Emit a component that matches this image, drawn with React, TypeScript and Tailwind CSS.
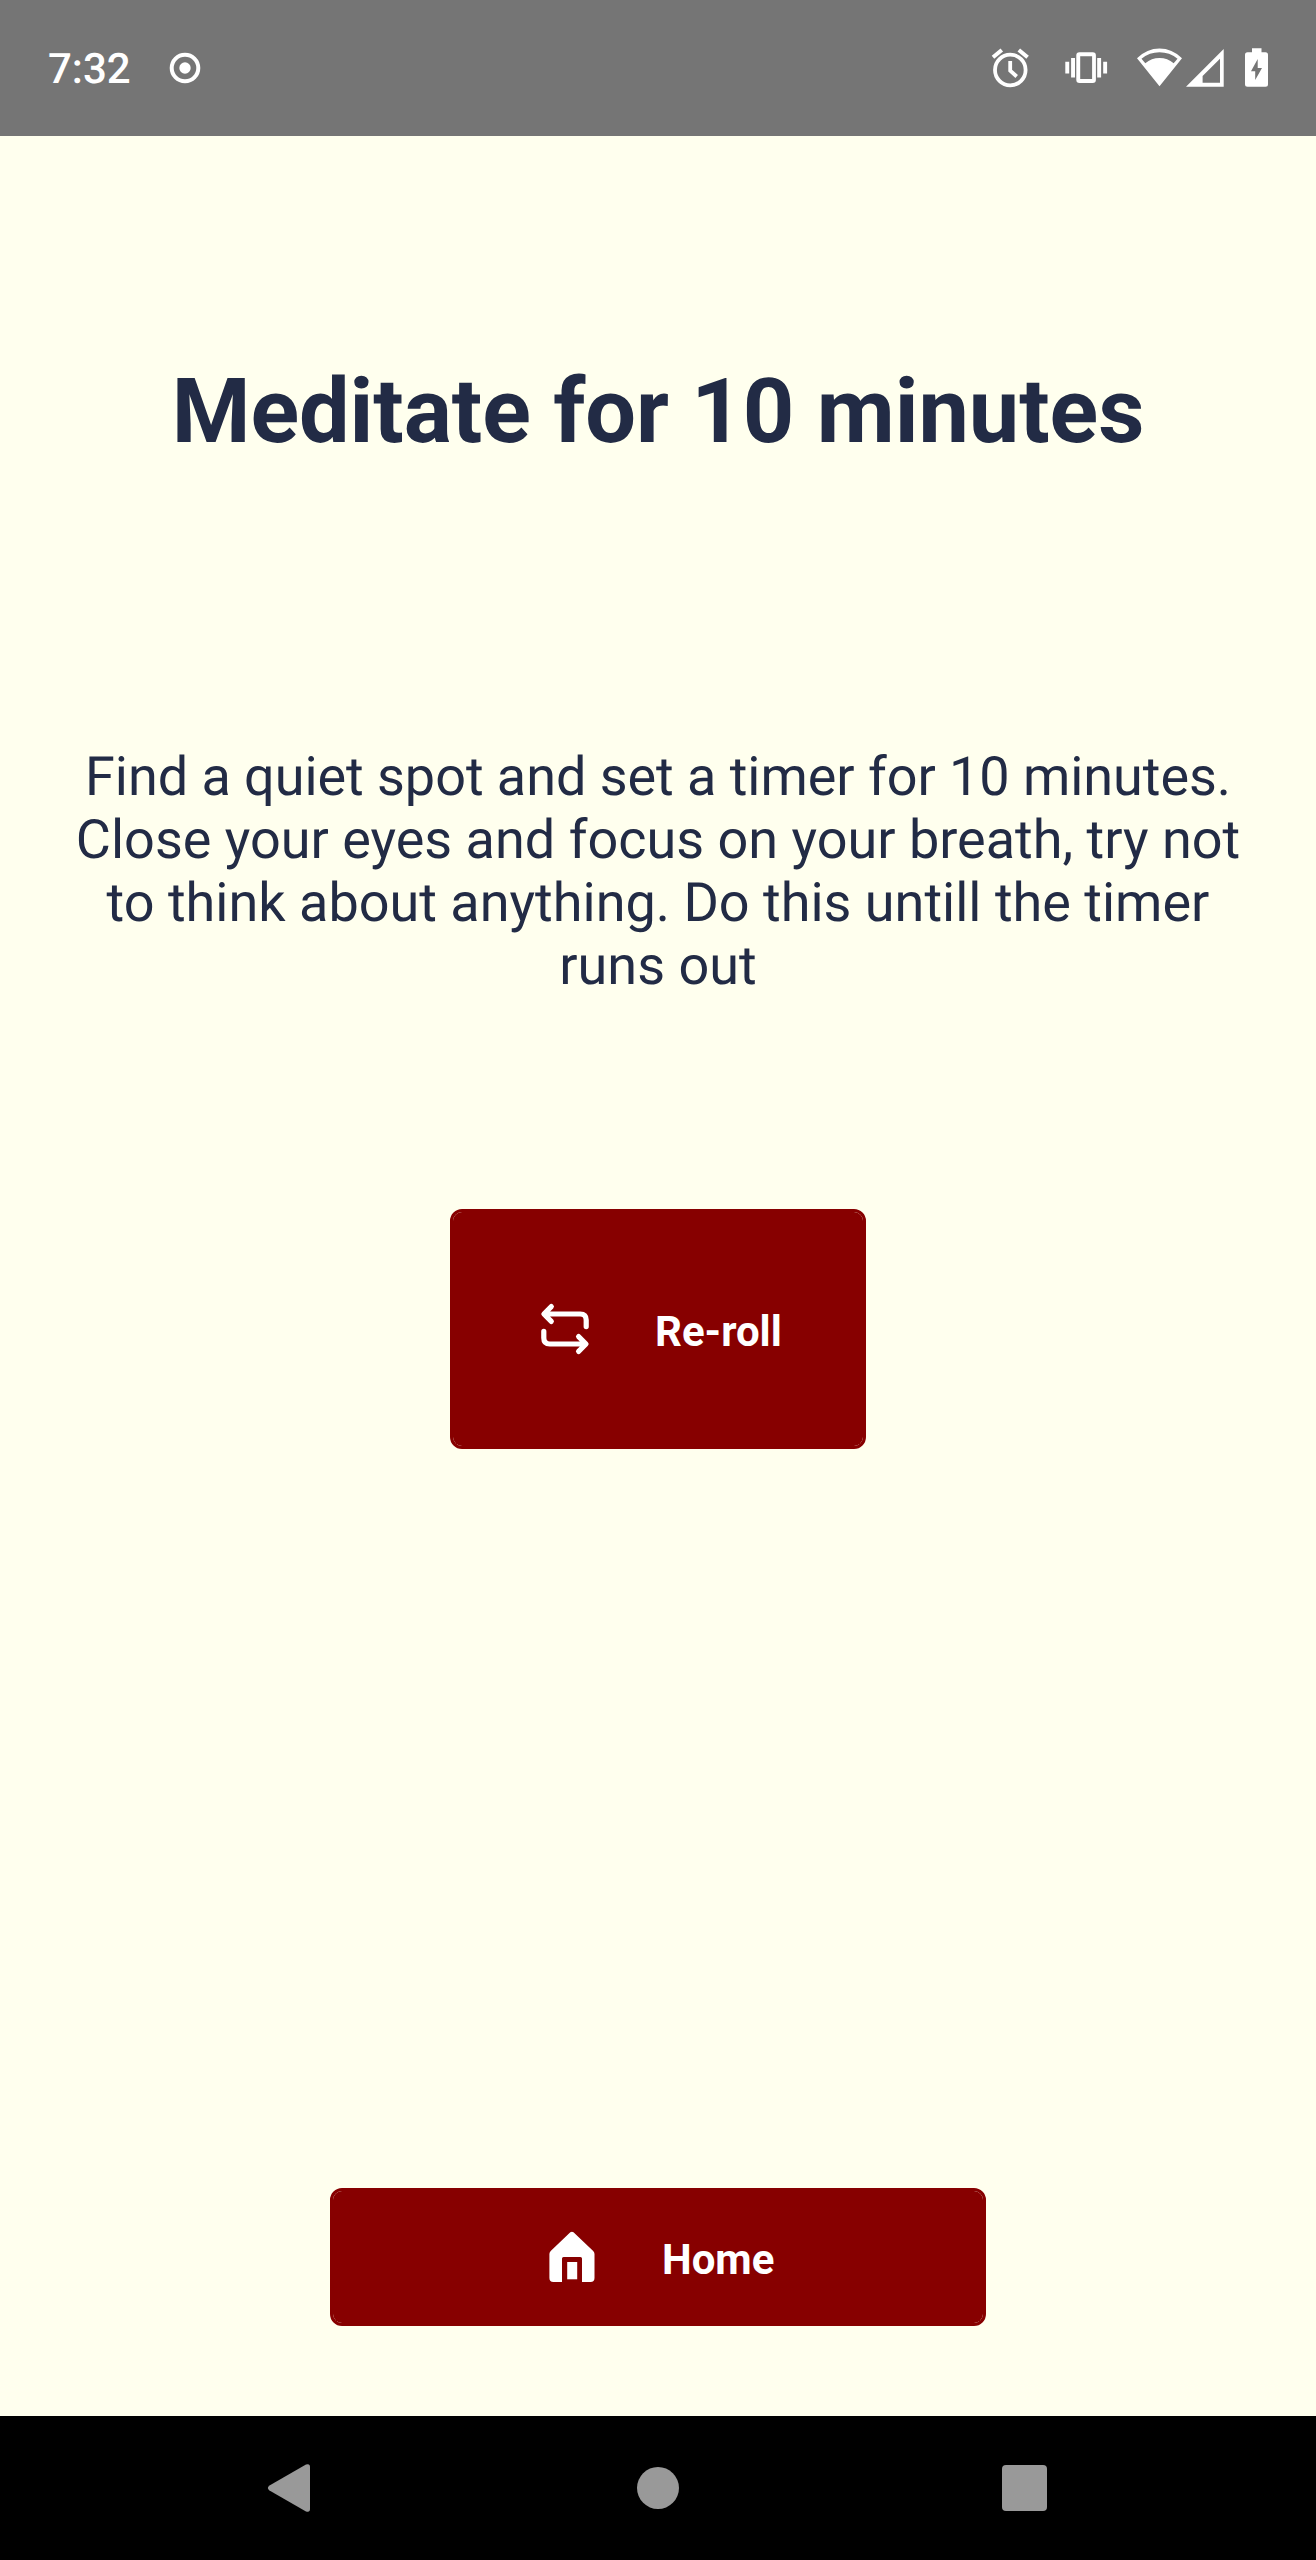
import React from "react";

function StatusBar() {
  return (
    <header className="flex h-[136px] shrink-0 items-center bg-[#757575] pl-12 text-white">
      <span className="pt-1 text-[42px] leading-[48px] font-medium">7:32</span>
      <svg className="ml-[38px] h-8 w-8" viewBox="0 0 32 32" fill="none">
        <circle cx="16" cy="16" r="13.3" stroke="currentColor" strokeWidth="4" />
        <circle cx="16" cy="16" r="5.7" fill="currentColor" />
      </svg>
      <div className="mr-[47px] ml-auto flex items-center">
        {/* alarm */}
        <svg className="h-10 w-10" viewBox="990 48 40 40" fill="none" stroke="currentColor">
          <circle cx="1010.3" cy="70" r="15.3" strokeWidth="3.8" />
          <path d="M1010.2 61v9.6l6.5 5.9" strokeWidth="3.8" />
          <path d="M993 57.2l8.8-7.2M1027.6 57.2l-8.8-7.2" strokeWidth="4" />
        </svg>
        {/* vibrate */}
        <svg className="ml-[34px] h-10 w-11" viewBox="1064 48 44 40" fill="currentColor">
          <path
            fillRule="evenodd"
            d="M1079.5 52.3h13.2a3.2 3.2 0 0 1 3.2 3.2v24.3a3.2 3.2 0 0 1-3.2 3.2h-13.2a3.2 3.2 0 0 1-3.2-3.2V55.500a3.2 3.2 0 0 1 3.2-3.2zM1080.200 56.300v22.700h11.900V56.300z"
          />
          <path d="M1065.300 61.800h3.900v11.800h-3.900zM1071.100 58h3.900v19.500h-3.900zM1097.200 58h3.900v19.500h-3.900zM1103.200 61.800h3.900v11.800h-3.900z" />
        </svg>
        {/* wifi */}
        <svg className="ml-7 h-10 w-[46px]" viewBox="1136 48 46 40" fill="currentColor">
          <path
            fillRule="evenodd"
            d="M1159.500 86.200L1137 58.200Q1147 48.500 1159.500 48.500T1182 58.200zM1141.500 58.700L1145.300 63.200Q1151.500 58 1159.500 58T1173.700 63.200L1177.500 58.700Q1169.500 52.300 1159.500 52.300T1141.500 58.700z"
          />
        </svg>
        {/* mobile signal */}
        <svg className="ml-1 h-10 w-[38px]" viewBox="1186 48 38 40" fill="currentColor">
          <path fillRule="evenodd" d="M1223.700 49v37.700H1186zM1220 58.700L1202.600 76v6.700H1220z" />
        </svg>
        {/* battery */}
        <svg className="ml-[21px] h-10 w-6" viewBox="1245 48 24 40" fill="currentColor">
          <path
            fillRule="evenodd"
            d="M1252 48.300h9.500v4h4a2.500 2.500 0 0 1 2.500 2.500v29.500a2.500 2.500 0 0 1-2.500 2.500h-18a2.500 2.500 0 0 1-2.500-2.500V54.800a2.500 2.500 0 0 1 2.500-2.500h4.500zM1257.700 59L1251 71.200h4.200V80L1262 68h-4.300z"
          />
        </svg>
      </div>
    </header>
  );
}

function RepeatIcon() {
  return (
    <svg
      className="h-[54px] w-[52px]"
      viewBox="539 1302 52 54"
      fill="none"
      stroke="currentColor"
      strokeWidth="5.200"
      strokeLinecap="round"
      strokeLinejoin="round"
    >
      <path d="M551.300 1306.600L543.900 1314L551.300 1321.400M544.500 1314H580.200Q586.200 1314 586.200 1320V1326.600" />
      <path d="M578.600 1336.600L586 1344L578.600 1351.400M585.500 1344H549.800Q543.800 1344 543.800 1338V1331.400" />
    </svg>
  );
}

function HomeIcon() {
  return (
    <svg className="h-[52px] w-[46px]" viewBox="549 2231 46 52" fill="currentColor">
      <path d="M570.300 2232.300Q571.900 2231 573.500 2232.300L593.200 2251Q594.500 2252.300 594.500 2254V2278Q594.500 2282 590.500 2282H582V2258.500Q582 2257 580.500 2257H563.500Q562 2257 562 2258.500V2282H553.400Q549.400 2282 549.400 2278V2254Q549.400 2252.300 550.700 2251z" />
      <path d="M567.200 2262h10v17.300h-10z" />
    </svg>
  );
}

const buttonBase =
  "flex items-center rounded-xl border-[3px] border-[#870000] bg-[#870000] bg-clip-padding text-[42px] leading-[48px] font-bold text-white";

export default function App() {
  return (
    <div className="flex h-[2560px] w-[1316px] flex-col overflow-hidden bg-[#ffffee] font-['Roboto',sans-serif] text-[#222b45] [text-rendering:geometricPrecision]">
      <StatusBar />
      <main className="flex flex-1 flex-col items-center">
        <h1 className="mt-[223px] text-center text-[90px] leading-[106px] font-bold tracking-[-0.05px]">
          Meditate for 10 minutes
        </h1>
        <p className="mt-[281px] w-[1196px] text-center text-[54px] leading-[63px]">
          <span className="tracking-[-0.05px]">
            Find a quiet spot and set a timer for 10 minutes.
          </span>{" "}
          Close your eyes and focus on your breath, try not to think about anything. Do this untill
          the timer runs out
        </p>
        <button className={`${buttonBase} mt-[211px] h-[240px] w-[416px] pl-[86px]`}>
          <RepeatIcon />
          <span className="ml-16 pt-[5px]">Re-roll</span>
        </button>
        <button className={`${buttonBase} mt-auto mb-[90px] h-[138px] w-[656px] pl-[216px]`}>
          <HomeIcon />
          <span className="ml-[67px] pt-[5px]">Home</span>
        </button>
      </main>
      <nav className="flex h-36 shrink-0 items-center bg-black pl-[267px] text-[#999999]">
        <svg className="h-12 w-11" viewBox="0 0 44 48" fill="currentColor">
          <path d="M39 .6Q43 -.8 43 3V45Q43 48.800 39 47.400L2.500 26.500Q-.7 24 2.500 21.500z" />
        </svg>
        <div className="ml-[326px] h-[42px] w-[42px] rounded-full bg-[#999999]" />
        <div className="ml-[323px] h-[46px] w-[45px] rounded bg-[#999999]" />
      </nav>
    </div>
  );
}
